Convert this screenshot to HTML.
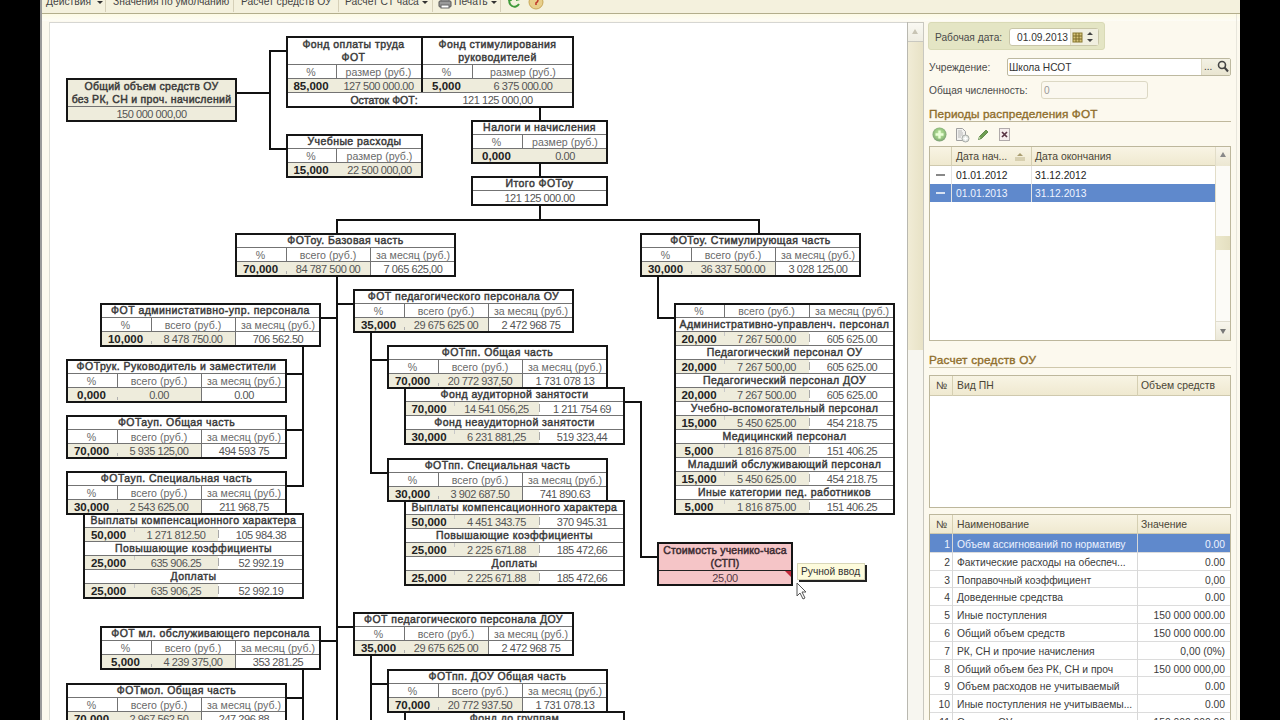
<!DOCTYPE html><html><head><meta charset="utf-8"><style>
*{margin:0;padding:0;box-sizing:border-box}
html,body{width:1280px;height:720px;overflow:hidden;background:#000;font-family:"Liberation Sans",sans-serif}
i,span,b,div{position:absolute;display:block;font-style:normal}
.bx{border:2px solid #151515}
.bgv{background:#eeecdc}
.hd{text-align:center;font-weight:normal;-webkit-text-stroke:0.45px #3a3a3a;letter-spacing:0.45px;font-size:10.5px;color:#3a3a3a;white-space:nowrap;overflow:visible}
.ph{font-size:10.6px;color:#6a6a6a;white-space:nowrap}
.pc{font-size:11.5px;font-weight:bold;color:#222;white-space:nowrap}
.vv{font-size:11px;letter-spacing:-0.45px;color:#555;white-space:nowrap}
.tb{font-size:10px;color:#444;white-space:nowrap}
.lbl{font-size:11px;color:#4a4a4a;white-space:nowrap}
.rt{font-size:10px;color:#333;white-space:nowrap}
</style></head><body>

<i style="left:40px;top:0px;width:1200px;height:720px;background:#fcf9ee"></i>
<i style="left:40px;top:0px;width:2px;height:720px;background:#9a9a9a"></i>
<i style="left:42px;top:0px;width:1198px;height:13px;background:#f4f1dd"></i>
<i style="left:42px;top:13px;width:1198px;height:1px;background:#b3ae8c"></i>
<span class="tb" style="left:46px;top:-5px;line-height:14px;font-size:10.3px">Действия</span>
<span class="tb" style="left:113px;top:-5px;line-height:14px;font-size:10.3px">Значения по умолчанию</span>
<span class="tb" style="left:241px;top:-5px;line-height:14px;font-size:10.3px">Расчет средств ОУ</span>
<span class="tb" style="left:345px;top:-5px;line-height:14px;font-size:10.3px">Расчет СТ часа</span>
<span class="tb" style="left:454px;top:-5px;line-height:14px;font-size:10.3px">Печать</span>
<i style="left:105px;top:0px;width:1px;height:12px;background:#d6d0b8"></i>
<i style="left:233px;top:0px;width:1px;height:12px;background:#d6d0b8"></i>
<i style="left:338px;top:0px;width:1px;height:12px;background:#d6d0b8"></i>
<i style="left:432px;top:0px;width:1px;height:12px;background:#d6d0b8"></i>
<i style="left:500px;top:0px;width:1px;height:12px;background:#d6d0b8"></i>
<span style="left:97px;top:1px;width:0;height:0;border-left:3px solid transparent;border-right:3px solid transparent;border-top:3px solid #333"></span>
<span style="left:422px;top:1px;width:0;height:0;border-left:3px solid transparent;border-right:3px solid transparent;border-top:3px solid #333"></span>
<span style="left:491px;top:1px;width:0;height:0;border-left:3px solid transparent;border-right:3px solid transparent;border-top:3px solid #333"></span>
<svg style="position:absolute;left:438px;top:-3px" width="14" height="12" viewBox="0 0 14 12"><rect x="3" y="0" width="8" height="4" fill="#eee" stroke="#888"/><rect x="1" y="4" width="12" height="6" rx="1" fill="#9a9a9a" stroke="#555"/><rect x="3" y="8" width="8" height="3" fill="#fff" stroke="#666"/></svg>
<svg style="position:absolute;left:507px;top:-4px" width="15" height="12" viewBox="0 0 15 12"><path d="M3 3 A5 5 0 0 0 12 8" fill="none" stroke="#3f9a3a" stroke-width="2"/><path d="M9 0 L13 4 L9 5 Z" fill="#3f9a3a"/><path d="M3 1 L1 5 L5 5 Z" fill="#3f9a3a"/></svg>
<svg style="position:absolute;left:528px;top:-5px" width="16" height="15" viewBox="0 0 16 15"><circle cx="8" cy="7" r="7" fill="#e8cf8a" stroke="#c9a85a"/><path d="M6 4 Q9 2 10 5 Q10 7 8 8 L8 10" fill="none" stroke="#c0392b" stroke-width="1.6"/></svg>
<i style="left:42px;top:14px;width:1198px;height:7px;background:linear-gradient(#fdfbe4,#fdfcf6)"></i>
<i style="left:49px;top:22px;width:859px;height:698px;background:#fff;border-top:1px solid #d6d6d2;border-left:1px solid #dcdcd4"></i>
<i style="left:907px;top:22px;width:17px;height:698px;background:#f7f6f0;border-left:1px solid #b9b8b0;border-right:1px solid #c9c8c0"></i>
<i style="left:908px;top:22px;width:15px;height:20px;background:linear-gradient(#f9f8f2,#efede2);border-bottom:1px solid #c9c8c0;border-top:1px solid #c9c8c0"></i>
<i style="left:908px;top:42px;width:15px;height:308px;background:linear-gradient(90deg,#f1ecd6,#e8e2c6)"></i>
<svg style="position:absolute;left:910px;top:27px" width="10" height="10" viewBox="0 0 10 10"><path d="M2 7 L5 2 L8 7 Z" fill="#c8c4b4"/></svg>
<i class="bgv" style="left:66px;top:78px;width:171px;height:43px"></i>
<span class="hd" style="left:66px;top:80px;width:171px;height:26px;line-height:13px;letter-spacing:0.3px">Общий объем средств ОУ<br>без РК, СН и проч. начислений</span>
<i style="left:66px;top:106px;width:171px;height:1px;background:#737373"></i>
<span class="vv" style="left:66px;top:107px;width:171px;height:14px;line-height:14px;text-align:center;">150 000 000,00</span>
<i class="bx" style="left:66px;top:78px;width:171px;height:44px"></i>
<i class="bgv" style="left:286px;top:78px;width:288px;height:15px"></i>
<span class="hd" style="left:286px;top:38px;width:135px;height:26px;line-height:13px">Фонд оплаты труда<br>ФОТ</span>
<span class="hd" style="left:421px;top:38px;width:153px;height:26px;line-height:13px">Фонд стимулирования<br>руководителей</span>
<i style="left:286px;top:64px;width:288px;height:1px;background:#737373"></i>
<i style="left:286px;top:78px;width:288px;height:1px;background:#737373"></i>
<i style="left:286px;top:92px;width:288px;height:1px;background:#737373"></i>
<i style="left:421px;top:36px;width:2px;height:56px;background:#151515"></i>
<i style="left:336px;top:64px;width:1px;height:14px;background:#737373"></i>
<i style="left:472px;top:64px;width:1px;height:14px;background:#737373"></i>
<span class="ph" style="left:286px;top:65px;width:50px;height:14px;line-height:14px;text-align:center;">%</span>
<span class="ph" style="left:336px;top:65px;width:85px;height:14px;line-height:14px;text-align:center;">размер (руб.)</span>
<span class="ph" style="left:421px;top:65px;width:51px;height:14px;line-height:14px;text-align:center;">%</span>
<span class="ph" style="left:472px;top:65px;width:102px;height:14px;line-height:14px;text-align:center;">размер (руб.)</span>
<span class="pc" style="left:286px;top:79px;width:50px;height:14px;line-height:14px;text-align:center;">85,000</span>
<span class="vv" style="left:336px;top:79px;width:85px;height:14px;line-height:14px;text-align:center;">127 500 000.00</span>
<span class="pc" style="left:421px;top:79px;width:51px;height:14px;line-height:14px;text-align:center;">5,000</span>
<span class="vv" style="left:472px;top:79px;width:102px;height:14px;line-height:14px;text-align:center;">6 375 000.00</span>
<span class="hd" style="left:286px;top:93px;width:136px;height:14px;line-height:14px;text-align:center;letter-spacing:0;padding-left:60px">Остаток ФОТ:</span>
<span class="vv" style="left:472px;top:93px;width:101px;height:14px;line-height:14px;text-align:center;margin-left:-25px">121 125 000,00</span>
<i class="bx" style="left:286px;top:36px;width:288px;height:72px"></i>
<i class="bgv" style="left:286px;top:162px;width:137px;height:15px"></i>
<span class="hd" style="left:286px;top:135px;width:137px;height:14px;line-height:13px">Учебные расходы</span>
<i style="left:286px;top:148px;width:137px;height:1px;background:#737373"></i>
<span class="ph" style="left:286px;top:149px;width:50px;height:14px;line-height:14px;text-align:center;">%</span>
<span class="ph" style="left:336px;top:149px;width:87px;height:14px;line-height:14px;text-align:center;">размер (руб.)</span>
<i style="left:336px;top:148px;width:1px;height:14px;background:#737373"></i>
<i style="left:286px;top:162px;width:137px;height:1px;background:#737373"></i>
<span class="pc" style="left:286px;top:163px;width:50px;height:14px;line-height:14px;text-align:center;">15,000</span>
<span class="vv" style="left:336px;top:163px;width:87px;height:14px;line-height:14px;text-align:center;">22 500 000,00</span>
<i class="bx" style="left:286px;top:134px;width:137px;height:44px"></i>
<i class="bgv" style="left:471px;top:148px;width:137px;height:15px"></i>
<span class="hd" style="left:471px;top:121px;width:137px;height:14px;line-height:13px">Налоги и начисления</span>
<i style="left:471px;top:134px;width:137px;height:1px;background:#737373"></i>
<span class="ph" style="left:471px;top:135px;width:51px;height:14px;line-height:14px;text-align:center;">%</span>
<span class="ph" style="left:522px;top:135px;width:86px;height:14px;line-height:14px;text-align:center;">размер (руб.)</span>
<i style="left:522px;top:134px;width:1px;height:14px;background:#737373"></i>
<i style="left:471px;top:148px;width:137px;height:1px;background:#737373"></i>
<span class="pc" style="left:471px;top:149px;width:51px;height:14px;line-height:14px;text-align:center;">0,000</span>
<span class="vv" style="left:522px;top:149px;width:86px;height:14px;line-height:14px;text-align:center;">0.00</span>
<i class="bx" style="left:471px;top:120px;width:137px;height:44px"></i>
<span class="hd" style="left:471px;top:177px;width:137px;height:14px;line-height:13px">Итого ФОТоу</span>
<i style="left:471px;top:190px;width:137px;height:1px;background:#737373"></i>
<span class="vv" style="left:471px;top:191px;width:137px;height:14px;line-height:14px;text-align:center;">121 125 000.00</span>
<i class="bx" style="left:471px;top:176px;width:137px;height:30px"></i>
<i class="bgv" style="left:235px;top:261px;width:135px;height:15px"></i>
<span class="hd" style="left:235px;top:234px;width:221px;height:14px;line-height:13px">ФОТоу. Базовая часть</span>
<i style="left:235px;top:247px;width:221px;height:1px;background:#737373"></i>
<span class="ph" style="left:235px;top:248px;width:51px;height:14px;line-height:14px;text-align:center;">%</span>
<span class="ph" style="left:286px;top:248px;width:84px;height:14px;line-height:14px;text-align:center;">всего (руб.)</span>
<span class="ph" style="left:370px;top:248px;width:86px;height:14px;line-height:14px;text-align:center;">за месяц (руб.)</span>
<i style="left:286px;top:247px;width:1px;height:14px;background:#737373"></i>
<i style="left:370px;top:247px;width:1px;height:14px;background:#737373"></i>
<i style="left:235px;top:261px;width:221px;height:1px;background:#737373"></i>
<span class="pc" style="left:235px;top:262px;width:51px;height:14px;line-height:14px;text-align:center;">70,000</span>
<span class="vv" style="left:286px;top:262px;width:84px;height:14px;line-height:14px;text-align:center;">84 787 500 00</span>
<span class="vv" style="left:370px;top:262px;width:86px;height:14px;line-height:14px;text-align:center;">7 065 625,00</span>
<i style="left:370px;top:261px;width:1px;height:14px;background:#737373"></i>
<i style="left:286px;top:271px;width:1px;height:3px;background:#b0b0b0"></i>
<i class="bx" style="left:235px;top:233px;width:221px;height:44px"></i>
<i class="bgv" style="left:640px;top:261px;width:135px;height:15px"></i>
<span class="hd" style="left:640px;top:234px;width:221px;height:14px;line-height:13px">ФОТоу. Стимулирующая часть</span>
<i style="left:640px;top:247px;width:221px;height:1px;background:#737373"></i>
<span class="ph" style="left:640px;top:248px;width:51px;height:14px;line-height:14px;text-align:center;">%</span>
<span class="ph" style="left:691px;top:248px;width:84px;height:14px;line-height:14px;text-align:center;">всего (руб.)</span>
<span class="ph" style="left:775px;top:248px;width:86px;height:14px;line-height:14px;text-align:center;">за месяц (руб.)</span>
<i style="left:691px;top:247px;width:1px;height:14px;background:#737373"></i>
<i style="left:775px;top:247px;width:1px;height:14px;background:#737373"></i>
<i style="left:640px;top:261px;width:221px;height:1px;background:#737373"></i>
<span class="pc" style="left:640px;top:262px;width:51px;height:14px;line-height:14px;text-align:center;">30,000</span>
<span class="vv" style="left:691px;top:262px;width:84px;height:14px;line-height:14px;text-align:center;">36 337 500.00</span>
<span class="vv" style="left:775px;top:262px;width:86px;height:14px;line-height:14px;text-align:center;">3 028 125,00</span>
<i style="left:775px;top:261px;width:1px;height:14px;background:#737373"></i>
<i style="left:691px;top:271px;width:1px;height:3px;background:#b0b0b0"></i>
<i class="bx" style="left:640px;top:233px;width:221px;height:44px"></i>
<i class="bgv" style="left:100px;top:331px;width:135px;height:15px"></i>
<span class="hd" style="left:100px;top:304px;width:221px;height:14px;line-height:13px">ФОТ администативно-упр. персонала</span>
<i style="left:100px;top:317px;width:221px;height:1px;background:#737373"></i>
<span class="ph" style="left:100px;top:318px;width:51px;height:14px;line-height:14px;text-align:center;">%</span>
<span class="ph" style="left:151px;top:318px;width:84px;height:14px;line-height:14px;text-align:center;">всего (руб.)</span>
<span class="ph" style="left:235px;top:318px;width:86px;height:14px;line-height:14px;text-align:center;">за месяц (руб.)</span>
<i style="left:151px;top:317px;width:1px;height:14px;background:#737373"></i>
<i style="left:235px;top:317px;width:1px;height:14px;background:#737373"></i>
<i style="left:100px;top:331px;width:221px;height:1px;background:#737373"></i>
<span class="pc" style="left:100px;top:332px;width:51px;height:14px;line-height:14px;text-align:center;">10,000</span>
<span class="vv" style="left:151px;top:332px;width:84px;height:14px;line-height:14px;text-align:center;">8 478 750.00</span>
<span class="vv" style="left:235px;top:332px;width:86px;height:14px;line-height:14px;text-align:center;">706 562.50</span>
<i style="left:235px;top:331px;width:1px;height:14px;background:#737373"></i>
<i style="left:151px;top:341px;width:1px;height:3px;background:#b0b0b0"></i>
<i class="bx" style="left:100px;top:303px;width:221px;height:44px"></i>
<i class="bgv" style="left:353px;top:317px;width:135px;height:15px"></i>
<span class="hd" style="left:353px;top:290px;width:221px;height:14px;line-height:13px">ФОТ педагогического персонала ОУ</span>
<i style="left:353px;top:303px;width:221px;height:1px;background:#737373"></i>
<span class="ph" style="left:353px;top:304px;width:51px;height:14px;line-height:14px;text-align:center;">%</span>
<span class="ph" style="left:404px;top:304px;width:84px;height:14px;line-height:14px;text-align:center;">всего (руб.)</span>
<span class="ph" style="left:488px;top:304px;width:86px;height:14px;line-height:14px;text-align:center;">за месяц (руб.)</span>
<i style="left:404px;top:303px;width:1px;height:14px;background:#737373"></i>
<i style="left:488px;top:303px;width:1px;height:14px;background:#737373"></i>
<i style="left:353px;top:317px;width:221px;height:1px;background:#737373"></i>
<span class="pc" style="left:353px;top:318px;width:51px;height:14px;line-height:14px;text-align:center;">35,000</span>
<span class="vv" style="left:404px;top:318px;width:84px;height:14px;line-height:14px;text-align:center;">29 675 625 00</span>
<span class="vv" style="left:488px;top:318px;width:86px;height:14px;line-height:14px;text-align:center;">2 472 968 75</span>
<i style="left:488px;top:317px;width:1px;height:14px;background:#737373"></i>
<i style="left:404px;top:327px;width:1px;height:3px;background:#b0b0b0"></i>
<i class="bx" style="left:353px;top:289px;width:221px;height:44px"></i>
<i class="bgv" style="left:66px;top:387px;width:135px;height:15px"></i>
<span class="hd" style="left:66px;top:360px;width:221px;height:14px;line-height:13px">ФОТрук. Руководитель и заместители</span>
<i style="left:66px;top:373px;width:221px;height:1px;background:#737373"></i>
<span class="ph" style="left:66px;top:374px;width:51px;height:14px;line-height:14px;text-align:center;">%</span>
<span class="ph" style="left:117px;top:374px;width:84px;height:14px;line-height:14px;text-align:center;">всего (руб.)</span>
<span class="ph" style="left:201px;top:374px;width:86px;height:14px;line-height:14px;text-align:center;">за месяц (руб.)</span>
<i style="left:117px;top:373px;width:1px;height:14px;background:#737373"></i>
<i style="left:201px;top:373px;width:1px;height:14px;background:#737373"></i>
<i style="left:66px;top:387px;width:221px;height:1px;background:#737373"></i>
<span class="pc" style="left:66px;top:388px;width:51px;height:14px;line-height:14px;text-align:center;">0,000</span>
<span class="vv" style="left:117px;top:388px;width:84px;height:14px;line-height:14px;text-align:center;">0.00</span>
<span class="vv" style="left:201px;top:388px;width:86px;height:14px;line-height:14px;text-align:center;">0.00</span>
<i style="left:201px;top:387px;width:1px;height:14px;background:#737373"></i>
<i style="left:117px;top:397px;width:1px;height:3px;background:#b0b0b0"></i>
<i class="bx" style="left:66px;top:359px;width:221px;height:44px"></i>
<i class="bgv" style="left:66px;top:443px;width:135px;height:15px"></i>
<span class="hd" style="left:66px;top:416px;width:221px;height:14px;line-height:13px">ФОТауп. Общая часть</span>
<i style="left:66px;top:429px;width:221px;height:1px;background:#737373"></i>
<span class="ph" style="left:66px;top:430px;width:51px;height:14px;line-height:14px;text-align:center;">%</span>
<span class="ph" style="left:117px;top:430px;width:84px;height:14px;line-height:14px;text-align:center;">всего (руб.)</span>
<span class="ph" style="left:201px;top:430px;width:86px;height:14px;line-height:14px;text-align:center;">за месяц (руб.)</span>
<i style="left:117px;top:429px;width:1px;height:14px;background:#737373"></i>
<i style="left:201px;top:429px;width:1px;height:14px;background:#737373"></i>
<i style="left:66px;top:443px;width:221px;height:1px;background:#737373"></i>
<span class="pc" style="left:66px;top:444px;width:51px;height:14px;line-height:14px;text-align:center;">70,000</span>
<span class="vv" style="left:117px;top:444px;width:84px;height:14px;line-height:14px;text-align:center;">5 935 125,00</span>
<span class="vv" style="left:201px;top:444px;width:86px;height:14px;line-height:14px;text-align:center;">494 593 75</span>
<i style="left:201px;top:443px;width:1px;height:14px;background:#737373"></i>
<i style="left:117px;top:453px;width:1px;height:3px;background:#b0b0b0"></i>
<i class="bx" style="left:66px;top:415px;width:221px;height:44px"></i>
<i class="bgv" style="left:66px;top:499px;width:135px;height:15px"></i>
<span class="hd" style="left:66px;top:472px;width:221px;height:14px;line-height:13px">ФОТауп. Специальная часть</span>
<i style="left:66px;top:485px;width:221px;height:1px;background:#737373"></i>
<span class="ph" style="left:66px;top:486px;width:51px;height:14px;line-height:14px;text-align:center;">%</span>
<span class="ph" style="left:117px;top:486px;width:84px;height:14px;line-height:14px;text-align:center;">всего (руб.)</span>
<span class="ph" style="left:201px;top:486px;width:86px;height:14px;line-height:14px;text-align:center;">за месяц (руб.)</span>
<i style="left:117px;top:485px;width:1px;height:14px;background:#737373"></i>
<i style="left:201px;top:485px;width:1px;height:14px;background:#737373"></i>
<i style="left:66px;top:499px;width:221px;height:1px;background:#737373"></i>
<span class="pc" style="left:66px;top:500px;width:51px;height:14px;line-height:14px;text-align:center;">30,000</span>
<span class="vv" style="left:117px;top:500px;width:84px;height:14px;line-height:14px;text-align:center;">2 543 625.00</span>
<span class="vv" style="left:201px;top:500px;width:86px;height:14px;line-height:14px;text-align:center;">211 968,75</span>
<i style="left:201px;top:499px;width:1px;height:14px;background:#737373"></i>
<i style="left:117px;top:509px;width:1px;height:3px;background:#b0b0b0"></i>
<i class="bx" style="left:66px;top:471px;width:221px;height:44px"></i>
<i class="bgv" style="left:83px;top:527px;width:135px;height:15px"></i>
<i class="bgv" style="left:83px;top:555px;width:135px;height:15px"></i>
<i class="bgv" style="left:83px;top:583px;width:135px;height:15px"></i>
<span class="hd" style="left:83px;top:514px;width:221px;height:14px;line-height:13px">Выплаты компенсационного характера</span>
<i style="left:83px;top:527px;width:221px;height:1px;background:#737373"></i>
<span class="pc" style="left:83px;top:528px;width:51px;height:14px;line-height:14px;text-align:center;">50,000</span>
<span class="vv" style="left:134px;top:528px;width:84px;height:14px;line-height:14px;text-align:center;">1 271 812.50</span>
<span class="vv" style="left:218px;top:528px;width:86px;height:14px;line-height:14px;text-align:center;">105 984.38</span>
<i style="left:218px;top:530px;width:1px;height:8px;background:#a8a8a8"></i>
<i style="left:134px;top:528px;width:1px;height:4px;background:#c8c8c8"></i>
<i style="left:83px;top:541px;width:221px;height:1px;background:#737373"></i>
<span class="hd" style="left:83px;top:542px;width:221px;height:14px;line-height:13px">Повышающие коэффициенты</span>
<i style="left:83px;top:555px;width:221px;height:1px;background:#737373"></i>
<span class="pc" style="left:83px;top:556px;width:51px;height:14px;line-height:14px;text-align:center;">25,000</span>
<span class="vv" style="left:134px;top:556px;width:84px;height:14px;line-height:14px;text-align:center;">635 906.25</span>
<span class="vv" style="left:218px;top:556px;width:86px;height:14px;line-height:14px;text-align:center;">52 992.19</span>
<i style="left:218px;top:558px;width:1px;height:8px;background:#a8a8a8"></i>
<i style="left:134px;top:556px;width:1px;height:4px;background:#c8c8c8"></i>
<i style="left:83px;top:569px;width:221px;height:1px;background:#737373"></i>
<span class="hd" style="left:83px;top:570px;width:221px;height:14px;line-height:13px">Доплаты</span>
<i style="left:83px;top:583px;width:221px;height:1px;background:#737373"></i>
<span class="pc" style="left:83px;top:584px;width:51px;height:14px;line-height:14px;text-align:center;">25,000</span>
<span class="vv" style="left:134px;top:584px;width:84px;height:14px;line-height:14px;text-align:center;">635 906,25</span>
<span class="vv" style="left:218px;top:584px;width:86px;height:14px;line-height:14px;text-align:center;">52 992.19</span>
<i style="left:218px;top:586px;width:1px;height:8px;background:#a8a8a8"></i>
<i style="left:134px;top:584px;width:1px;height:4px;background:#c8c8c8"></i>
<i class="bx" style="left:83px;top:513px;width:221px;height:86px"></i>
<i class="bgv" style="left:387px;top:373px;width:135px;height:15px"></i>
<span class="hd" style="left:387px;top:346px;width:221px;height:14px;line-height:13px">ФОТпп. Общая часть</span>
<i style="left:387px;top:359px;width:221px;height:1px;background:#737373"></i>
<span class="ph" style="left:387px;top:360px;width:51px;height:14px;line-height:14px;text-align:center;">%</span>
<span class="ph" style="left:438px;top:360px;width:84px;height:14px;line-height:14px;text-align:center;">всего (руб.)</span>
<span class="ph" style="left:522px;top:360px;width:86px;height:14px;line-height:14px;text-align:center;">за месяц (руб.)</span>
<i style="left:438px;top:359px;width:1px;height:14px;background:#737373"></i>
<i style="left:522px;top:359px;width:1px;height:14px;background:#737373"></i>
<i style="left:387px;top:373px;width:221px;height:1px;background:#737373"></i>
<span class="pc" style="left:387px;top:374px;width:51px;height:14px;line-height:14px;text-align:center;">70,000</span>
<span class="vv" style="left:438px;top:374px;width:84px;height:14px;line-height:14px;text-align:center;">20 772 937,50</span>
<span class="vv" style="left:522px;top:374px;width:86px;height:14px;line-height:14px;text-align:center;">1 731 078 13</span>
<i style="left:522px;top:373px;width:1px;height:14px;background:#737373"></i>
<i style="left:438px;top:383px;width:1px;height:3px;background:#b0b0b0"></i>
<i class="bx" style="left:387px;top:345px;width:221px;height:44px"></i>
<i class="bgv" style="left:404px;top:401px;width:135px;height:15px"></i>
<i class="bgv" style="left:404px;top:429px;width:135px;height:15px"></i>
<span class="hd" style="left:404px;top:388px;width:221px;height:14px;line-height:13px">Фонд аудиторной занятости</span>
<i style="left:404px;top:401px;width:221px;height:1px;background:#737373"></i>
<span class="pc" style="left:404px;top:402px;width:50px;height:14px;line-height:14px;text-align:center;">70,000</span>
<span class="vv" style="left:454px;top:402px;width:85px;height:14px;line-height:14px;text-align:center;">14 541 056,25</span>
<span class="vv" style="left:539px;top:402px;width:86px;height:14px;line-height:14px;text-align:center;">1 211 754 69</span>
<i style="left:539px;top:404px;width:1px;height:8px;background:#a8a8a8"></i>
<i style="left:454px;top:402px;width:1px;height:4px;background:#c8c8c8"></i>
<i style="left:404px;top:415px;width:221px;height:1px;background:#737373"></i>
<span class="hd" style="left:404px;top:416px;width:221px;height:14px;line-height:13px">Фонд неаудиторной занятости</span>
<i style="left:404px;top:429px;width:221px;height:1px;background:#737373"></i>
<span class="pc" style="left:404px;top:430px;width:50px;height:14px;line-height:14px;text-align:center;">30,000</span>
<span class="vv" style="left:454px;top:430px;width:85px;height:14px;line-height:14px;text-align:center;">6 231 881,25</span>
<span class="vv" style="left:539px;top:430px;width:86px;height:14px;line-height:14px;text-align:center;">519 323,44</span>
<i style="left:539px;top:432px;width:1px;height:8px;background:#a8a8a8"></i>
<i style="left:454px;top:430px;width:1px;height:4px;background:#c8c8c8"></i>
<i class="bx" style="left:404px;top:387px;width:221px;height:58px"></i>
<i class="bgv" style="left:387px;top:486px;width:135px;height:15px"></i>
<span class="hd" style="left:387px;top:459px;width:221px;height:14px;line-height:13px">ФОТпп. Специальная часть</span>
<i style="left:387px;top:472px;width:221px;height:1px;background:#737373"></i>
<span class="ph" style="left:387px;top:473px;width:51px;height:14px;line-height:14px;text-align:center;">%</span>
<span class="ph" style="left:438px;top:473px;width:84px;height:14px;line-height:14px;text-align:center;">всего (руб.)</span>
<span class="ph" style="left:522px;top:473px;width:86px;height:14px;line-height:14px;text-align:center;">за месяц (руб.)</span>
<i style="left:438px;top:472px;width:1px;height:14px;background:#737373"></i>
<i style="left:522px;top:472px;width:1px;height:14px;background:#737373"></i>
<i style="left:387px;top:486px;width:221px;height:1px;background:#737373"></i>
<span class="pc" style="left:387px;top:487px;width:51px;height:14px;line-height:14px;text-align:center;">30,000</span>
<span class="vv" style="left:438px;top:487px;width:84px;height:14px;line-height:14px;text-align:center;">3 902 687.50</span>
<span class="vv" style="left:522px;top:487px;width:86px;height:14px;line-height:14px;text-align:center;">741 890.63</span>
<i style="left:522px;top:486px;width:1px;height:14px;background:#737373"></i>
<i style="left:438px;top:496px;width:1px;height:3px;background:#b0b0b0"></i>
<i class="bx" style="left:387px;top:458px;width:221px;height:44px"></i>
<i class="bgv" style="left:404px;top:514px;width:135px;height:15px"></i>
<i class="bgv" style="left:404px;top:542px;width:135px;height:15px"></i>
<i class="bgv" style="left:404px;top:570px;width:135px;height:15px"></i>
<span class="hd" style="left:404px;top:501px;width:221px;height:14px;line-height:13px">Выплаты компенсационного характера</span>
<i style="left:404px;top:514px;width:221px;height:1px;background:#737373"></i>
<span class="pc" style="left:404px;top:515px;width:50px;height:14px;line-height:14px;text-align:center;">50,000</span>
<span class="vv" style="left:454px;top:515px;width:85px;height:14px;line-height:14px;text-align:center;">4 451 343.75</span>
<span class="vv" style="left:539px;top:515px;width:86px;height:14px;line-height:14px;text-align:center;">370 945.31</span>
<i style="left:539px;top:517px;width:1px;height:8px;background:#a8a8a8"></i>
<i style="left:454px;top:515px;width:1px;height:4px;background:#c8c8c8"></i>
<i style="left:404px;top:528px;width:221px;height:1px;background:#737373"></i>
<span class="hd" style="left:404px;top:529px;width:221px;height:14px;line-height:13px">Повышающие коэффициенты</span>
<i style="left:404px;top:542px;width:221px;height:1px;background:#737373"></i>
<span class="pc" style="left:404px;top:543px;width:50px;height:14px;line-height:14px;text-align:center;">25,000</span>
<span class="vv" style="left:454px;top:543px;width:85px;height:14px;line-height:14px;text-align:center;">2 225 671.88</span>
<span class="vv" style="left:539px;top:543px;width:86px;height:14px;line-height:14px;text-align:center;">185 472,66</span>
<i style="left:539px;top:545px;width:1px;height:8px;background:#a8a8a8"></i>
<i style="left:454px;top:543px;width:1px;height:4px;background:#c8c8c8"></i>
<i style="left:404px;top:556px;width:221px;height:1px;background:#737373"></i>
<span class="hd" style="left:404px;top:557px;width:221px;height:14px;line-height:13px">Доплаты</span>
<i style="left:404px;top:570px;width:221px;height:1px;background:#737373"></i>
<span class="pc" style="left:404px;top:571px;width:50px;height:14px;line-height:14px;text-align:center;">25,000</span>
<span class="vv" style="left:454px;top:571px;width:85px;height:14px;line-height:14px;text-align:center;">2 225 671.88</span>
<span class="vv" style="left:539px;top:571px;width:86px;height:14px;line-height:14px;text-align:center;">185 472,66</span>
<i style="left:539px;top:573px;width:1px;height:8px;background:#a8a8a8"></i>
<i style="left:454px;top:571px;width:1px;height:4px;background:#c8c8c8"></i>
<i class="bx" style="left:404px;top:500px;width:221px;height:86px"></i>
<i style="left:657px;top:542px;width:136px;height:43px;background:#f5c5c7"></i>
<span class="hd" style="left:657px;top:544px;width:136px;height:26px;line-height:13px;letter-spacing:0.15px;color:#3a2a30;-webkit-text-stroke:0.45px #3a2a30">Стоимость ученико-часа<br>(СТП)</span>
<i style="left:657px;top:570px;width:136px;height:1px;background:#222"></i>
<span class="vv" style="left:657px;top:571px;width:136px;height:14px;line-height:14px;text-align:center;color:#553944">25,00</span>
<i style="left:785px;top:571px;width:0;height:0;border-left:6px solid transparent;border-top:6px solid #c2283a"></i>
<i class="bx" style="left:657px;top:542px;width:136px;height:44px"></i>
<i class="bgv" style="left:674px;top:331px;width:135px;height:15px"></i>
<i class="bgv" style="left:674px;top:359px;width:135px;height:15px"></i>
<i class="bgv" style="left:674px;top:387px;width:135px;height:15px"></i>
<i class="bgv" style="left:674px;top:415px;width:135px;height:15px"></i>
<i class="bgv" style="left:674px;top:443px;width:135px;height:15px"></i>
<i class="bgv" style="left:674px;top:471px;width:135px;height:15px"></i>
<i class="bgv" style="left:674px;top:499px;width:135px;height:15px"></i>
<span class="ph" style="left:674px;top:304px;width:50px;height:14px;line-height:14px;text-align:center;">%</span>
<span class="ph" style="left:724px;top:304px;width:85px;height:14px;line-height:14px;text-align:center;">всего (руб.)</span>
<span class="ph" style="left:809px;top:304px;width:86px;height:14px;line-height:14px;text-align:center;">за месяц (руб.)</span>
<i style="left:724px;top:303px;width:1px;height:14px;background:#737373"></i>
<i style="left:809px;top:303px;width:1px;height:14px;background:#737373"></i>
<i style="left:674px;top:317px;width:221px;height:1px;background:#737373"></i>
<span class="hd" style="left:674px;top:318px;width:221px;height:14px;line-height:13px">Административно-управленч. персонал</span>
<i style="left:674px;top:331px;width:221px;height:1px;background:#737373"></i>
<span class="pc" style="left:674px;top:332px;width:50px;height:14px;line-height:14px;text-align:center;">20,000</span>
<span class="vv" style="left:724px;top:332px;width:85px;height:14px;line-height:14px;text-align:center;">7 267 500.00</span>
<span class="vv" style="left:809px;top:332px;width:86px;height:14px;line-height:14px;text-align:center;">605 625.00</span>
<i style="left:809px;top:334px;width:1px;height:8px;background:#a8a8a8"></i>
<i style="left:724px;top:332px;width:1px;height:4px;background:#c8c8c8"></i>
<i style="left:674px;top:345px;width:221px;height:1px;background:#737373"></i>
<span class="hd" style="left:674px;top:346px;width:221px;height:14px;line-height:13px">Педагогический персонал ОУ</span>
<i style="left:674px;top:359px;width:221px;height:1px;background:#737373"></i>
<span class="pc" style="left:674px;top:360px;width:50px;height:14px;line-height:14px;text-align:center;">20,000</span>
<span class="vv" style="left:724px;top:360px;width:85px;height:14px;line-height:14px;text-align:center;">7 267 500,00</span>
<span class="vv" style="left:809px;top:360px;width:86px;height:14px;line-height:14px;text-align:center;">605 625.00</span>
<i style="left:809px;top:362px;width:1px;height:8px;background:#a8a8a8"></i>
<i style="left:724px;top:360px;width:1px;height:4px;background:#c8c8c8"></i>
<i style="left:674px;top:373px;width:221px;height:1px;background:#737373"></i>
<span class="hd" style="left:674px;top:374px;width:221px;height:14px;line-height:13px">Педагогический персонал ДОУ</span>
<i style="left:674px;top:387px;width:221px;height:1px;background:#737373"></i>
<span class="pc" style="left:674px;top:388px;width:50px;height:14px;line-height:14px;text-align:center;">20,000</span>
<span class="vv" style="left:724px;top:388px;width:85px;height:14px;line-height:14px;text-align:center;">7 267 500.00</span>
<span class="vv" style="left:809px;top:388px;width:86px;height:14px;line-height:14px;text-align:center;">605 625.00</span>
<i style="left:809px;top:390px;width:1px;height:8px;background:#a8a8a8"></i>
<i style="left:724px;top:388px;width:1px;height:4px;background:#c8c8c8"></i>
<i style="left:674px;top:401px;width:221px;height:1px;background:#737373"></i>
<span class="hd" style="left:674px;top:402px;width:221px;height:14px;line-height:13px">Учебно-вспомогательный персонал</span>
<i style="left:674px;top:415px;width:221px;height:1px;background:#737373"></i>
<span class="pc" style="left:674px;top:416px;width:50px;height:14px;line-height:14px;text-align:center;">15,000</span>
<span class="vv" style="left:724px;top:416px;width:85px;height:14px;line-height:14px;text-align:center;">5 450 625.00</span>
<span class="vv" style="left:809px;top:416px;width:86px;height:14px;line-height:14px;text-align:center;">454 218.75</span>
<i style="left:809px;top:418px;width:1px;height:8px;background:#a8a8a8"></i>
<i style="left:724px;top:416px;width:1px;height:4px;background:#c8c8c8"></i>
<i style="left:674px;top:429px;width:221px;height:1px;background:#737373"></i>
<span class="hd" style="left:674px;top:430px;width:221px;height:14px;line-height:13px">Медицинский персонал</span>
<i style="left:674px;top:443px;width:221px;height:1px;background:#737373"></i>
<span class="pc" style="left:674px;top:444px;width:50px;height:14px;line-height:14px;text-align:center;">5,000</span>
<span class="vv" style="left:724px;top:444px;width:85px;height:14px;line-height:14px;text-align:center;">1 816 875.00</span>
<span class="vv" style="left:809px;top:444px;width:86px;height:14px;line-height:14px;text-align:center;">151 406.25</span>
<i style="left:809px;top:446px;width:1px;height:8px;background:#a8a8a8"></i>
<i style="left:724px;top:444px;width:1px;height:4px;background:#c8c8c8"></i>
<i style="left:674px;top:457px;width:221px;height:1px;background:#737373"></i>
<span class="hd" style="left:674px;top:458px;width:221px;height:14px;line-height:13px">Младший обслуживающий персонал</span>
<i style="left:674px;top:471px;width:221px;height:1px;background:#737373"></i>
<span class="pc" style="left:674px;top:472px;width:50px;height:14px;line-height:14px;text-align:center;">15,000</span>
<span class="vv" style="left:724px;top:472px;width:85px;height:14px;line-height:14px;text-align:center;">5 450 625.00</span>
<span class="vv" style="left:809px;top:472px;width:86px;height:14px;line-height:14px;text-align:center;">454 218.75</span>
<i style="left:809px;top:474px;width:1px;height:8px;background:#a8a8a8"></i>
<i style="left:724px;top:472px;width:1px;height:4px;background:#c8c8c8"></i>
<i style="left:674px;top:485px;width:221px;height:1px;background:#737373"></i>
<span class="hd" style="left:674px;top:486px;width:221px;height:14px;line-height:13px">Иные категории пед. работников</span>
<i style="left:674px;top:499px;width:221px;height:1px;background:#737373"></i>
<span class="pc" style="left:674px;top:500px;width:50px;height:14px;line-height:14px;text-align:center;">5,000</span>
<span class="vv" style="left:724px;top:500px;width:85px;height:14px;line-height:14px;text-align:center;">1 816 875.00</span>
<span class="vv" style="left:809px;top:500px;width:86px;height:14px;line-height:14px;text-align:center;">151 406.25</span>
<i style="left:809px;top:502px;width:1px;height:8px;background:#a8a8a8"></i>
<i style="left:724px;top:500px;width:1px;height:4px;background:#c8c8c8"></i>
<i class="bx" style="left:674px;top:303px;width:221px;height:212px"></i>
<i class="bgv" style="left:100px;top:654px;width:135px;height:15px"></i>
<span class="hd" style="left:100px;top:627px;width:221px;height:14px;line-height:13px">ФОТ мл. обслуживающего персонала</span>
<i style="left:100px;top:640px;width:221px;height:1px;background:#737373"></i>
<span class="ph" style="left:100px;top:641px;width:51px;height:14px;line-height:14px;text-align:center;">%</span>
<span class="ph" style="left:151px;top:641px;width:84px;height:14px;line-height:14px;text-align:center;">всего (руб.)</span>
<span class="ph" style="left:235px;top:641px;width:86px;height:14px;line-height:14px;text-align:center;">за месяц (руб.)</span>
<i style="left:151px;top:640px;width:1px;height:14px;background:#737373"></i>
<i style="left:235px;top:640px;width:1px;height:14px;background:#737373"></i>
<i style="left:100px;top:654px;width:221px;height:1px;background:#737373"></i>
<span class="pc" style="left:100px;top:655px;width:51px;height:14px;line-height:14px;text-align:center;">5,000</span>
<span class="vv" style="left:151px;top:655px;width:84px;height:14px;line-height:14px;text-align:center;">4 239 375,00</span>
<span class="vv" style="left:235px;top:655px;width:86px;height:14px;line-height:14px;text-align:center;">353 281.25</span>
<i style="left:235px;top:654px;width:1px;height:14px;background:#737373"></i>
<i style="left:151px;top:664px;width:1px;height:3px;background:#b0b0b0"></i>
<i class="bx" style="left:100px;top:626px;width:221px;height:44px"></i>
<i class="bgv" style="left:353px;top:640px;width:135px;height:15px"></i>
<span class="hd" style="left:353px;top:613px;width:221px;height:14px;line-height:13px">ФОТ педагогического персонала ДОУ</span>
<i style="left:353px;top:626px;width:221px;height:1px;background:#737373"></i>
<span class="ph" style="left:353px;top:627px;width:51px;height:14px;line-height:14px;text-align:center;">%</span>
<span class="ph" style="left:404px;top:627px;width:84px;height:14px;line-height:14px;text-align:center;">всего (руб.)</span>
<span class="ph" style="left:488px;top:627px;width:86px;height:14px;line-height:14px;text-align:center;">за месяц (руб.)</span>
<i style="left:404px;top:626px;width:1px;height:14px;background:#737373"></i>
<i style="left:488px;top:626px;width:1px;height:14px;background:#737373"></i>
<i style="left:353px;top:640px;width:221px;height:1px;background:#737373"></i>
<span class="pc" style="left:353px;top:641px;width:51px;height:14px;line-height:14px;text-align:center;">35,000</span>
<span class="vv" style="left:404px;top:641px;width:84px;height:14px;line-height:14px;text-align:center;">29 675 625 00</span>
<span class="vv" style="left:488px;top:641px;width:86px;height:14px;line-height:14px;text-align:center;">2 472 968 75</span>
<i style="left:488px;top:640px;width:1px;height:14px;background:#737373"></i>
<i style="left:404px;top:650px;width:1px;height:3px;background:#b0b0b0"></i>
<i class="bx" style="left:353px;top:612px;width:221px;height:44px"></i>
<i class="bgv" style="left:66px;top:711px;width:135px;height:15px"></i>
<span class="hd" style="left:66px;top:684px;width:221px;height:14px;line-height:13px">ФОТмол. Общая часть</span>
<i style="left:66px;top:697px;width:221px;height:1px;background:#737373"></i>
<span class="ph" style="left:66px;top:698px;width:51px;height:14px;line-height:14px;text-align:center;">%</span>
<span class="ph" style="left:117px;top:698px;width:84px;height:14px;line-height:14px;text-align:center;">всего (руб.)</span>
<span class="ph" style="left:201px;top:698px;width:86px;height:14px;line-height:14px;text-align:center;">за месяц (руб.)</span>
<i style="left:117px;top:697px;width:1px;height:14px;background:#737373"></i>
<i style="left:201px;top:697px;width:1px;height:14px;background:#737373"></i>
<i style="left:66px;top:711px;width:221px;height:1px;background:#737373"></i>
<span class="pc" style="left:66px;top:712px;width:51px;height:14px;line-height:14px;text-align:center;">70,000</span>
<span class="vv" style="left:117px;top:712px;width:84px;height:14px;line-height:14px;text-align:center;">2 967 562.50</span>
<span class="vv" style="left:201px;top:712px;width:86px;height:14px;line-height:14px;text-align:center;">247 296.88</span>
<i style="left:201px;top:711px;width:1px;height:14px;background:#737373"></i>
<i style="left:117px;top:721px;width:1px;height:3px;background:#b0b0b0"></i>
<i class="bx" style="left:66px;top:683px;width:221px;height:44px"></i>
<i class="bgv" style="left:387px;top:697px;width:135px;height:15px"></i>
<span class="hd" style="left:387px;top:670px;width:221px;height:14px;line-height:13px">ФОТпп. ДОУ Общая часть</span>
<i style="left:387px;top:683px;width:221px;height:1px;background:#737373"></i>
<span class="ph" style="left:387px;top:684px;width:51px;height:14px;line-height:14px;text-align:center;">%</span>
<span class="ph" style="left:438px;top:684px;width:84px;height:14px;line-height:14px;text-align:center;">всего (руб.)</span>
<span class="ph" style="left:522px;top:684px;width:86px;height:14px;line-height:14px;text-align:center;">за месяц (руб.)</span>
<i style="left:438px;top:683px;width:1px;height:14px;background:#737373"></i>
<i style="left:522px;top:683px;width:1px;height:14px;background:#737373"></i>
<i style="left:387px;top:697px;width:221px;height:1px;background:#737373"></i>
<span class="pc" style="left:387px;top:698px;width:51px;height:14px;line-height:14px;text-align:center;">70,000</span>
<span class="vv" style="left:438px;top:698px;width:84px;height:14px;line-height:14px;text-align:center;">20 772 937.50</span>
<span class="vv" style="left:522px;top:698px;width:86px;height:14px;line-height:14px;text-align:center;">1 731 078.13</span>
<i style="left:522px;top:697px;width:1px;height:14px;background:#737373"></i>
<i style="left:438px;top:707px;width:1px;height:3px;background:#b0b0b0"></i>
<i class="bx" style="left:387px;top:669px;width:221px;height:44px"></i>
<i class="bgv" style="left:404px;top:725px;width:135px;height:15px"></i>
<span class="hd" style="left:404px;top:712px;width:221px;height:14px;line-height:13px">Фонд до группам</span>
<i style="left:404px;top:725px;width:221px;height:1px;background:#737373"></i>
<span class="pc" style="left:404px;top:726px;width:50px;height:14px;line-height:14px;text-align:center;"></span>
<span class="vv" style="left:454px;top:726px;width:85px;height:14px;line-height:14px;text-align:center;"></span>
<span class="vv" style="left:539px;top:726px;width:86px;height:14px;line-height:14px;text-align:center;"></span>
<i style="left:539px;top:725px;width:1px;height:14px;background:#737373"></i>
<i style="left:454px;top:735px;width:1px;height:3px;background:#b0b0b0"></i>
<i class="bx" style="left:404px;top:711px;width:221px;height:30px"></i>
<i style="left:237px;top:92px;width:34px;height:2px;background:#111"></i>
<i style="left:269px;top:50px;width:2px;height:100px;background:#111"></i>
<i style="left:269px;top:50px;width:18px;height:2px;background:#111"></i>
<i style="left:269px;top:148px;width:18px;height:2px;background:#111"></i>
<i style="left:539px;top:107px;width:2px;height:14px;background:#111"></i>
<i style="left:539px;top:163px;width:2px;height:14px;background:#111"></i>
<i style="left:539px;top:205px;width:2px;height:15px;background:#111"></i>
<i style="left:336px;top:219px;width:424px;height:2px;background:#111"></i>
<i style="left:336px;top:219px;width:2px;height:15px;background:#111"></i>
<i style="left:758px;top:219px;width:2px;height:15px;background:#111"></i>
<i style="left:336px;top:276px;width:2px;height:444px;background:#111"></i>
<i style="left:321px;top:317px;width:16px;height:2px;background:#111"></i>
<i style="left:337px;top:303px;width:16px;height:2px;background:#111"></i>
<i style="left:337px;top:626px;width:16px;height:2px;background:#111"></i>
<i style="left:321px;top:640px;width:16px;height:2px;background:#111"></i>
<i style="left:302px;top:345px;width:2px;height:142px;background:#111"></i>
<i style="left:287px;top:373px;width:16px;height:2px;background:#111"></i>
<i style="left:287px;top:429px;width:16px;height:2px;background:#111"></i>
<i style="left:287px;top:485px;width:16px;height:2px;background:#111"></i>
<i style="left:370px;top:331px;width:2px;height:143px;background:#111"></i>
<i style="left:371px;top:359px;width:16px;height:2px;background:#111"></i>
<i style="left:371px;top:472px;width:16px;height:2px;background:#111"></i>
<i style="left:640px;top:401px;width:2px;height:157px;background:#111"></i>
<i style="left:625px;top:401px;width:16px;height:2px;background:#111"></i>
<i style="left:641px;top:556px;width:16px;height:2px;background:#111"></i>
<i style="left:657px;top:276px;width:2px;height:43px;background:#111"></i>
<i style="left:658px;top:317px;width:16px;height:2px;background:#111"></i>
<i style="left:302px;top:668px;width:2px;height:52px;background:#111"></i>
<i style="left:287px;top:697px;width:16px;height:2px;background:#111"></i>
<i style="left:370px;top:654px;width:2px;height:66px;background:#111"></i>
<i style="left:371px;top:683px;width:16px;height:2px;background:#111"></i>
<i style="left:799px;top:565px;width:68px;height:17px;background:#222"></i>
<span style="left:797px;top:563px;width:68px;height:17px;background:#fdfbdc;border:1px solid #d8d6b8;font-size:10.2px;color:#333;line-height:15px;padding-left:3px;white-space:nowrap">Ручной ввод</span>
<svg style="position:absolute;left:796px;top:582px" width="14" height="18" viewBox="0 0 14 18"><path d="M1 1 L1 14 L4 11 L7 17 L9 16 L6 10 L10 10 Z" fill="#fff" stroke="#555" stroke-width="1"/></svg>
<i style="left:1236px;top:14px;width:1px;height:706px;background:#e8e6dc"></i>
<i style="left:1240px;top:0px;width:40px;height:720px;background:#000"></i>
<i style="left:928px;top:22px;width:177px;height:28px;background:#e4e5c4;border-radius:3px;border:1px solid #d9dab6"></i>
<span class="lbl" style="left:935px;top:31px;line-height:14px;font-size:10.2px">Рабочая дата:</span>
<i style="left:1009px;top:28px;width:90px;height:18px;background:#fff;border:1px solid #c9c6a8;border-radius:3px"></i>
<span class="lbl" style="left:1017px;top:31px;line-height:14px;font-size:10.2px;color:#333">01.09.2013</span>
<i style="left:1070px;top:29px;width:28px;height:16px;background:#f1efe0;border-left:1px solid #e2dfc8"></i>
<svg style="position:absolute;left:1072px;top:31px" width="12" height="12" viewBox="0 0 12 12"><rect x="1" y="2" width="9" height="9" fill="#d7c47a" stroke="#8a7a30" stroke-width="1"/><path d="M1 5h9M1 8h9M4 2v9M7 2v9" stroke="#7a6a28" stroke-width="1"/></svg>
<svg style="position:absolute;left:1085px;top:30px" width="10" height="14" viewBox="0 0 10 14"><path d="M2 5 L5 2 L8 5 Z M2 9 L5 12 L8 9 Z" fill="#444"/></svg>
<span class="lbl" style="left:929px;top:61px;line-height:14px;font-size:10.2px">Учреждение:</span>
<i style="left:1007px;top:58px;width:224px;height:18px;background:#fff;border:1px solid #bdb9a0;border-radius:2px"></i>
<span class="lbl" style="left:1009px;top:61px;line-height:14px;font-size:10.2px;color:#333">Школа НСОТ</span>
<i style="left:1201px;top:59px;width:29px;height:16px;background:linear-gradient(#f3f1e4,#e9e5d0);border-left:1px solid #ddd8c0"></i>
<span class="lbl" style="left:1204px;top:60px;line-height:14px;font-size:10px;color:#333">...</span>
<svg style="position:absolute;left:1217px;top:60px" width="12" height="13" viewBox="0 0 12 13"><circle cx="5" cy="5" r="3.5" fill="none" stroke="#444" stroke-width="1.6"/><path d="M7.5 7.5 L11 11.5" stroke="#444" stroke-width="2"/></svg>
<span class="lbl" style="left:929px;top:84px;line-height:14px;font-size:10.2px">Общая численность:</span>
<i style="left:1041px;top:81px;width:107px;height:18px;background:#fbf8ef;border:1px solid #dcd8c4;border-radius:3px"></i>
<span class="lbl" style="left:1044px;top:84px;line-height:14px;font-size:10.2px;color:#999">0</span>
<span style="left:929px;top:106px;line-height:16px;font-size:11.8px;color:#8f6e2c;-webkit-text-stroke:0.35px #8f6e2c;white-space:nowrap;letter-spacing:0.1px">Периоды распределения ФОТ</span>
<i style="left:929px;top:121px;width:302px;height:1px;background:#bfb89c"></i>
<svg style="position:absolute;left:932px;top:127px" width="16" height="16" viewBox="0 0 16 16"><defs><radialGradient id="g1" cx="50%" cy="45%" r="55%"><stop offset="0" stop-color="#c6e8a8"/><stop offset="0.6" stop-color="#9ccb84"/><stop offset="1" stop-color="#7a9c72"/></radialGradient></defs><circle cx="7.5" cy="7.5" r="7" fill="url(#g1)"/><path d="M7.5 3.5v8M3.5 7.5h8" stroke="#eaffd8" stroke-width="2.4"/></svg>
<svg style="position:absolute;left:955px;top:127px" width="15" height="16" viewBox="0 0 15 16"><path d="M1.5 1.5h6l3 3v9h-9z" fill="#f2f2f0" stroke="#a0a0a0"/><path d="M3 4h4M3 6h5M3 8h5M3 10h3" stroke="#b8b8b8"/><circle cx="10.5" cy="11.5" r="3.5" fill="#e0e4e0" stroke="#a8aca8"/><path d="M10.5 9.5v4M8.5 11.5h4" stroke="#fff" stroke-width="1.4"/></svg>
<svg style="position:absolute;left:977px;top:128px" width="13" height="13" viewBox="0 0 13 13"><path d="M1.5 11.5 L2.5 8.5 L9 2 L11 4 L4.5 10.5 Z" fill="#6f9e52" stroke="#4f7a3a" stroke-width="0.8"/><path d="M2 11 L3 9" stroke="#cfe8b8" stroke-width="1"/></svg>
<svg style="position:absolute;left:998px;top:127px" width="13" height="15" viewBox="0 0 13 15"><rect x="1.5" y="1.5" width="10" height="12" fill="#f6eeee" stroke="#b0aaaa"/><path d="M4 5 L9 10 M9 5 L4 10" stroke="#5a3545" stroke-width="1.7"/></svg>
<i style="left:929px;top:146px;width:302px;height:195px;background:#fff;border:1px solid #bdb79c"></i>
<i style="left:930px;top:147px;width:300px;height:19px;background:linear-gradient(#f8f4e4,#efe9d0);border-bottom:1px solid #cfc9ae"></i>
<i style="left:951px;top:147px;width:1px;height:19px;background:#d5cfb2"></i>
<i style="left:1031px;top:147px;width:1px;height:19px;background:#d5cfb2"></i>
<span class="rt" style="left:956px;top:147px;width:80px;line-height:19px;color:#4a4536;text-align:left;font-size:10.4px">Дата нач...</span>
<span class="rt" style="left:1035px;top:147px;width:120px;line-height:19px;color:#4a4536;text-align:left;font-size:10.4px">Дата окончания</span>
<svg style="position:absolute;left:1014px;top:151px" width="12" height="10" viewBox="0 0 12 10"><path d="M3 5 L6 2 L9 5 Z" fill="#a99d70"/><path d="M1 7h10M1 9h10" stroke="#bdb38a"/></svg>
<i style="left:1215px;top:147px;width:15px;height:193px;background:#fcfbf7;border-left:1px solid #e2ddc8"></i>
<i style="left:1216px;top:147px;width:14px;height:19px;background:linear-gradient(#f8f5ea,#ece7d2)"></i>
<svg style="position:absolute;left:1218px;top:150px" width="10" height="10" viewBox="0 0 10 10"><path d="M2 7 L5 2 L8 7 Z" fill="#888"/></svg>
<i style="left:1216px;top:236px;width:14px;height:14px;background:linear-gradient(90deg,#ece8cc,#e4dfc0)"></i>
<i style="left:1216px;top:321px;width:14px;height:19px;background:linear-gradient(#f8f6ee,#ebe8d8);border-top:1px solid #e0ddd0"></i>
<svg style="position:absolute;left:1218px;top:326px" width="10" height="10" viewBox="0 0 10 10"><path d="M2 3 L5 8 L8 3 Z" fill="#777"/></svg>
<i style="left:930px;top:166px;width:285px;height:18px;background:#fff"></i>
<i style="left:930px;top:184px;width:285px;height:18px;background:#5f89cc"></i>
<i style="left:951px;top:166px;width:1px;height:36px;background:#e3e3e3"></i>
<i style="left:1031px;top:166px;width:1px;height:36px;background:#e3e3e3"></i>
<i style="left:936px;top:174px;width:9px;height:2px;background:#888"></i>
<i style="left:936px;top:192px;width:9px;height:2px;background:#d8e2f2"></i>
<span class="rt" style="left:956px;top:167px;line-height:17px;font-size:10.3px;color:#222">01.01.2012</span>
<span class="rt" style="left:1035px;top:167px;line-height:17px;font-size:10.3px;color:#222">31.12.2012</span>
<span class="rt" style="left:956px;top:185px;line-height:17px;font-size:10.3px;color:#f0f4ff">01.01.2013</span>
<span class="rt" style="left:1035px;top:185px;line-height:17px;font-size:10.3px;color:#f0f4ff">31.12.2013</span>
<span style="left:929px;top:352px;line-height:16px;font-size:11.8px;color:#8f6e2c;-webkit-text-stroke:0.35px #8f6e2c;white-space:nowrap;letter-spacing:0.2px">Расчет средств ОУ</span>
<i style="left:929px;top:367px;width:302px;height:1px;background:#cfc8ac"></i>
<i style="left:929px;top:375px;width:302px;height:133px;background:#fff;border:1px solid #bdb79c"></i>
<i style="left:930px;top:376px;width:300px;height:20px;background:linear-gradient(#f8f4e4,#efe9d0);border-bottom:1px solid #cfc9ae"></i>
<i style="left:952px;top:376px;width:1px;height:20px;background:#d5cfb2"></i>
<i style="left:1137px;top:376px;width:1px;height:20px;background:#d5cfb2"></i>
<span class="rt" style="left:936px;top:376px;width:15px;line-height:20px;color:#4a4536;text-align:left;font-size:10.4px">№</span>
<span class="rt" style="left:957px;top:376px;width:120px;line-height:20px;color:#4a4536;text-align:left;font-size:10.4px">Вид ПН</span>
<span class="rt" style="left:1141px;top:376px;width:90px;line-height:20px;color:#4a4536;text-align:left;font-size:10.4px">Объем средств</span>
<i style="left:929px;top:514px;width:302px;height:226px;background:#fff;border:1px solid #bdb79c"></i>
<i style="left:930px;top:515px;width:300px;height:19px;background:linear-gradient(#f8f4e4,#efe9d0);border-bottom:1px solid #cfc9ae"></i>
<i style="left:952px;top:515px;width:1px;height:19px;background:#d5cfb2"></i>
<i style="left:1137px;top:515px;width:1px;height:19px;background:#d5cfb2"></i>
<span class="rt" style="left:936px;top:515px;width:15px;line-height:19px;color:#4a4536;text-align:left;font-size:10.4px">№</span>
<span class="rt" style="left:957px;top:515px;width:120px;line-height:19px;color:#4a4536;text-align:left;font-size:10.4px">Наименование</span>
<span class="rt" style="left:1141px;top:515px;width:90px;line-height:19px;color:#4a4536;text-align:left;font-size:10.4px">Значение</span>
<i style="left:930px;top:534px;width:300px;height:18px;background:#5f89cc"></i>
<i style="left:930px;top:552px;width:300px;height:1px;background:#dcdcdc"></i>
<span class="rt" style="left:930px;top:535.5px;width:20px;text-align:right;line-height:18px;font-size:10.3px;color:#eef3ff">1</span>
<span class="rt" style="left:957px;top:535.5px;line-height:18px;font-size:10.3px;color:#eef3ff">Объем ассигнований по нормативу</span>
<span class="rt" style="left:1138px;top:535.5px;width:87px;text-align:right;line-height:18px;font-size:10.3px;color:#eef3ff">0.00</span>
<i style="left:930px;top:570px;width:300px;height:1px;background:#dcdcdc"></i>
<span class="rt" style="left:930px;top:553.5px;width:20px;text-align:right;line-height:18px;font-size:10.3px;color:#3a3a3a">2</span>
<span class="rt" style="left:957px;top:553.5px;line-height:18px;font-size:10.3px;color:#3a3a3a">Фактические расходы на обеспеч...</span>
<span class="rt" style="left:1138px;top:553.5px;width:87px;text-align:right;line-height:18px;font-size:10.3px;color:#3a3a3a">0.00</span>
<i style="left:930px;top:587px;width:300px;height:1px;background:#dcdcdc"></i>
<span class="rt" style="left:930px;top:571.5px;width:20px;text-align:right;line-height:18px;font-size:10.3px;color:#3a3a3a">3</span>
<span class="rt" style="left:957px;top:571.5px;line-height:18px;font-size:10.3px;color:#3a3a3a">Поправочный коэффициент</span>
<span class="rt" style="left:1138px;top:571.5px;width:87px;text-align:right;line-height:18px;font-size:10.3px;color:#3a3a3a">0,00</span>
<i style="left:930px;top:605px;width:300px;height:1px;background:#dcdcdc"></i>
<span class="rt" style="left:930px;top:588.5px;width:20px;text-align:right;line-height:18px;font-size:10.3px;color:#3a3a3a">4</span>
<span class="rt" style="left:957px;top:588.5px;line-height:18px;font-size:10.3px;color:#3a3a3a">Доведенные средства</span>
<span class="rt" style="left:1138px;top:588.5px;width:87px;text-align:right;line-height:18px;font-size:10.3px;color:#3a3a3a">0.00</span>
<i style="left:930px;top:623px;width:300px;height:1px;background:#dcdcdc"></i>
<span class="rt" style="left:930px;top:606.5px;width:20px;text-align:right;line-height:18px;font-size:10.3px;color:#3a3a3a">5</span>
<span class="rt" style="left:957px;top:606.5px;line-height:18px;font-size:10.3px;color:#3a3a3a">Иные поступления</span>
<span class="rt" style="left:1138px;top:606.5px;width:87px;text-align:right;line-height:18px;font-size:10.3px;color:#3a3a3a">150 000 000.00</span>
<i style="left:930px;top:641px;width:300px;height:1px;background:#dcdcdc"></i>
<span class="rt" style="left:930px;top:624.5px;width:20px;text-align:right;line-height:18px;font-size:10.3px;color:#3a3a3a">6</span>
<span class="rt" style="left:957px;top:624.5px;line-height:18px;font-size:10.3px;color:#3a3a3a">Общий объем средств</span>
<span class="rt" style="left:1138px;top:624.5px;width:87px;text-align:right;line-height:18px;font-size:10.3px;color:#3a3a3a">150 000 000.00</span>
<i style="left:930px;top:659px;width:300px;height:1px;background:#dcdcdc"></i>
<span class="rt" style="left:930px;top:642.5px;width:20px;text-align:right;line-height:18px;font-size:10.3px;color:#3a3a3a">7</span>
<span class="rt" style="left:957px;top:642.5px;line-height:18px;font-size:10.3px;color:#3a3a3a">РК, СН и прочие начисления</span>
<span class="rt" style="left:1138px;top:642.5px;width:87px;text-align:right;line-height:18px;font-size:10.3px;color:#3a3a3a">0,00 (0%)</span>
<i style="left:930px;top:676px;width:300px;height:1px;background:#dcdcdc"></i>
<span class="rt" style="left:930px;top:660.5px;width:20px;text-align:right;line-height:18px;font-size:10.3px;color:#3a3a3a">8</span>
<span class="rt" style="left:957px;top:660.5px;line-height:18px;font-size:10.3px;color:#3a3a3a">Общий объем без РК, СН и проч</span>
<span class="rt" style="left:1138px;top:660.5px;width:87px;text-align:right;line-height:18px;font-size:10.3px;color:#3a3a3a">150 000 000,00</span>
<i style="left:930px;top:694px;width:300px;height:1px;background:#dcdcdc"></i>
<span class="rt" style="left:930px;top:677.5px;width:20px;text-align:right;line-height:18px;font-size:10.3px;color:#3a3a3a">9</span>
<span class="rt" style="left:957px;top:677.5px;line-height:18px;font-size:10.3px;color:#3a3a3a">Объем расходов  не учитываемый</span>
<span class="rt" style="left:1138px;top:677.5px;width:87px;text-align:right;line-height:18px;font-size:10.3px;color:#3a3a3a">0.00</span>
<i style="left:930px;top:712px;width:300px;height:1px;background:#dcdcdc"></i>
<span class="rt" style="left:930px;top:695.5px;width:20px;text-align:right;line-height:18px;font-size:10.3px;color:#3a3a3a">10</span>
<span class="rt" style="left:957px;top:695.5px;line-height:18px;font-size:10.3px;color:#3a3a3a">Иные поступления  не учитываемы...</span>
<span class="rt" style="left:1138px;top:695.5px;width:87px;text-align:right;line-height:18px;font-size:10.3px;color:#3a3a3a">0.00</span>
<i style="left:930px;top:730px;width:300px;height:1px;background:#dcdcdc"></i>
<span class="rt" style="left:930px;top:713.5px;width:20px;text-align:right;line-height:18px;font-size:10.3px;color:#3a3a3a">11</span>
<span class="rt" style="left:957px;top:713.5px;line-height:18px;font-size:10.3px;color:#3a3a3a">Остаток ОУ на начало периода</span>
<span class="rt" style="left:1138px;top:713.5px;width:87px;text-align:right;line-height:18px;font-size:10.3px;color:#3a3a3a">150 000 000.00</span>
<i style="left:952px;top:534px;width:1px;height:190px;background:#d8d8d8"></i>
<i style="left:1137px;top:534px;width:1px;height:190px;background:#d8d8d8"></i>
</body></html>
